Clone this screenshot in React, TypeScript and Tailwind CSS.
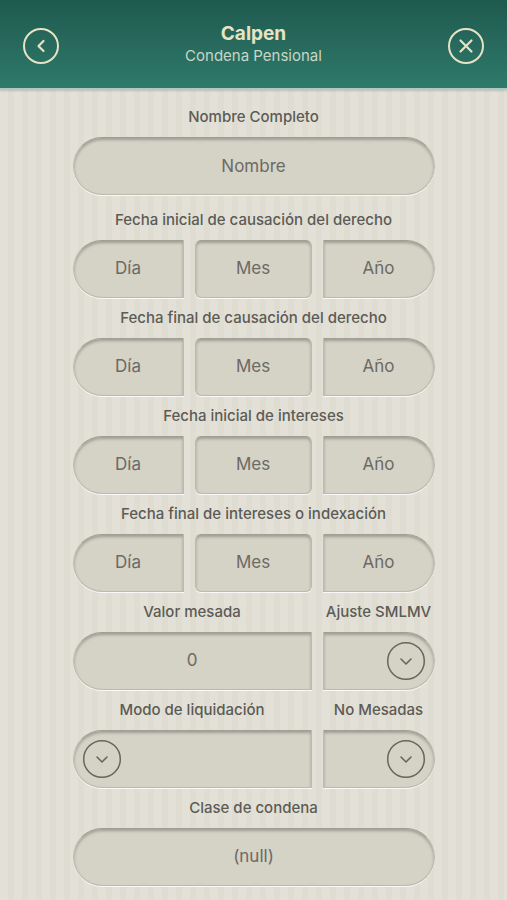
import React from "react";

const font = { fontFamily: "Inter, 'Liberation Sans', sans-serif" };

const field =
  "flex items-center justify-center h-[58px] bg-[#d5d2c6] border border-[#bdbaae] border-t-[#a19e92] shadow-[inset_0_2px_3px_rgba(0,0,0,0.25),0_1px_0_rgba(255,255,255,0.8)] text-[17px] text-[#6b6a64]";

const Label = ({ children, wide = false }: { children: React.ReactNode; wide?: boolean }) => (
  <div
    className={`text-center text-[15px] leading-5 font-medium text-[#5c5b56] mb-[10px] ${
      wide ? "mt-[15px]" : "mt-[10px]"
    }`}
  >
    {children}
  </div>
);

const Chevron = () => (
  <svg width="40" height="40" viewBox="0 0 40 40" fill="none">
    <circle cx="20" cy="20" r="18.3" stroke="#67665f" strokeWidth="1.5" />
    <path d="M15 18l5 5 5-5" stroke="#67665f" strokeWidth="1.6" strokeLinecap="round" strokeLinejoin="round" />
  </svg>
);

const DateRow = ({ label, wide }: { label: string; wide?: boolean }) => (
  <>
    <Label wide={wide}>{label}</Label>
    <div className="grid grid-cols-[111px_117px_112px] gap-[11px]">
      <div className={`${field} rounded-l-full rounded-r-[6px]`}>Día</div>
      <div className={`${field} rounded-[6px]`}>Mes</div>
      <div className={`${field} rounded-r-full rounded-l-[6px]`}>Año</div>
    </div>
  </>
);

export default function App() {
  return (
    <div
      style={font}
      className="w-[507px] h-[900px] overflow-hidden flex flex-col bg-[#e1dfd4] bg-[repeating-linear-gradient(90deg,#e3e1d7_0px,#e3e1d7_8px,#dfddd2_8px,#dfddd2_14px)]"
    >
      <header className="h-[90px] shrink-0 flex items-center justify-between px-[22px] bg-gradient-to-b from-[#1f5a4f] to-[#2f7a6b] border-b-2 border-[#a9cbc2] shadow-[0_1px_2px_rgba(0,0,0,0.15)]">
        <svg width="38" height="38" viewBox="0 0 38 38" fill="none" className="mt-[4px]">
          <circle cx="19" cy="19" r="17" stroke="#e6e2c4" strokeWidth="2" />
          <path d="M21.5 14l-5 5 5 5" stroke="#e6e2c4" strokeWidth="2.2" strokeLinecap="round" strokeLinejoin="round" />
        </svg>
        <div className="flex flex-col items-center">
          <div className="text-[19px] leading-6 font-bold text-[#e8e3c2]">Calpen</div>
          <div className="text-[15px] leading-5 text-[#c7d6c6]">Condena Pensional</div>
        </div>
        <svg width="38" height="38" viewBox="0 0 38 38" fill="none" className="mt-[4px]">
          <circle cx="19" cy="19" r="17" stroke="#e6e2c4" strokeWidth="2" />
          <path d="M13.5 13.5l11 11M24.5 13.5l-11 11" stroke="#e6e2c4" strokeWidth="2.2" strokeLinecap="round" />
        </svg>
      </header>

      <main className="w-[362px] mx-auto pt-[2px]">
        <Label wide>Nombre Completo</Label>
        <div className={`${field} rounded-full pt-[2px]`}>Nombre</div>

        <DateRow label="Fecha inicial de causación del derecho" wide />
        <DateRow label="Fecha final de causación del derecho" />
        <DateRow label="Fecha inicial de intereses" />
        <DateRow label="Fecha final de intereses o indexación" />

        <div className="grid grid-cols-[239px_112px] gap-x-[11px]">
          <Label>Valor mesada</Label>
          <Label>Ajuste SMLMV</Label>
          <div className={`${field} rounded-l-full rounded-r-[6px]`}>0</div>
          <div className={`${field} rounded-r-full rounded-l-[6px] justify-end pr-[8px]`}>
            <Chevron />
          </div>
          <Label>Modo de liquidación</Label>
          <Label>No Mesadas</Label>
          <div className={`${field} rounded-l-full rounded-r-[6px] justify-start pl-[8px]`}>
            <Chevron />
          </div>
          <div className={`${field} rounded-r-full rounded-l-[6px] justify-end pr-[8px]`}>
            <Chevron />
          </div>
        </div>

        <Label>Clase de condena</Label>
        <div className={`${field} rounded-full`}>(null)</div>
      </main>
    </div>
  );
}
